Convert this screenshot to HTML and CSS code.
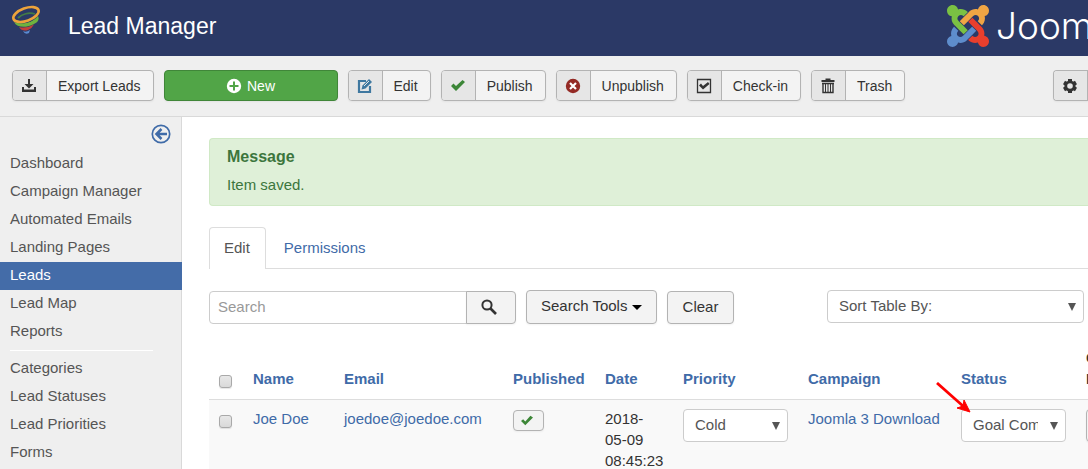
FILE: index.html
```html
<!DOCTYPE html>
<html lang="en">
<head>
<meta charset="utf-8">
<title>Lead Manager</title>
<link rel="stylesheet" href="styles.css">
</head>
<body>
<header class="header">
  <svg class="app-logo" width="32" height="34" viewBox="0 0 32 34" fill="none">
    <path d="M12 27q3 2 7-1l-1 3q-4 2-6-2z" fill="#5b8ad0"/>
    <path d="M8 23q7 2 15-2.500-2 4-6 5.500-6 2-9-3z" fill="#c2413a"/>
    <path d="M7 14c4-4 11-6 17-4M6 17q8 3 18-4" stroke="#447c45" stroke-width="1.800"/>
    <path d="M3 18c6 3 19 1 24-6 2 4-1 7-5 8.500C15 24 6 24 3 18z" fill="#6fb33e"/>
    <path d="M5 17c7 2 16-1 21-7l-4 6c-5 4-12 4-17 1z" fill="#2b3966"/>
    <ellipse cx="15" cy="10.500" rx="13.300" ry="6.300" transform="rotate(-20 15 10.500)" stroke="#eda33b" stroke-width="2.600"/>
  </svg>
  <h1 class="title">Lead Manager</h1>
  <div class="brand">
    <svg width="42" height="42" viewBox="0 0 24 24">
      <defs>
        <path id="arm-a" d="M16.719 14.759L14.220 17.260l-2.370 2.370-.462.466c-1.368 1.365-3.297 1.830-5.047 1.397-.327 1.424-1.604 2.490-3.130 2.490C1.438 23.983 0 22.547 0 20.772c0-1.518 1.055-2.790 2.469-3.120-.446-1.760.019-3.710 1.396-5.090l.179-.180 2.370 2.370-.184.181c-.769.779-.769 2.024 0 2.789.771.780 2.022.780 2.787 0l.465-.465 2.367-2.371 2.502-2.506z"/>
        <path id="arm-b" d="M17.643 21.411c-1.822.563-3.885.120-5.328-1.318l-.180-.185 2.365-2.369.180.184c.771.768 2.018.768 2.787 0 .765-.765.769-2.010-.004-2.781l-.466-.465-2.365-2.370-2.502-2.503 2.370-2.369 2.499 2.505 2.367 2.370.464.464c1.365 1.360 1.846 3.278 1.411 5.021 1.560.224 2.759 1.560 2.759 3.180 0 1.784-1.439 3.210-3.209 3.210-1.545 0-2.851-1.096-3.135-2.565z"/>
      </defs>
      <use href="#arm-a" fill="#5e8dcc"/>
      <use href="#arm-a" fill="#f0a544" transform="rotate(180 12 12)"/>
      <use href="#arm-b" fill="#e93f2d"/>
      <use href="#arm-b" fill="#7ac143" transform="rotate(180 12 12)"/>
    </svg>
    <span class="wordmark">Joom</span>
  </div>
</header>

<div class="toolbar">
  <button class="tool"><span class="cell"><svg width="16" height="16" viewBox="0 0 16 16" fill="#333"><path d="M7 1h2v5h3.500L8 10.500 3.500 6H7zM1 9h2v2.500h10V9h2v5H1z"/></svg></span><span class="label">Export Leads</span></button>
  <button class="tool new"><svg width="16" height="16" viewBox="0 0 16 16"><circle cx="8" cy="8" r="7.200" fill="#fff"/><path d="M8 3.500v9M3.500 8h9" stroke="#51a547" stroke-width="2"/></svg><span>New</span></button>
  <button class="tool"><span class="cell"><svg width="16" height="16" viewBox="0 0 16 16" fill="none" stroke="#3f78a0" stroke-width="2.200"><path d="M9 3H2v11h11V8"/><path d="M4.500 11.500l1-4L12 1l3 3-6.500 6.500z" fill="#3f78a0" stroke="none"/><path d="M7 8l5-5" stroke="#e6e6e6" stroke-width="1"/></svg></span><span class="label">Edit</span></button>
  <button class="tool"><span class="cell"><svg width="16" height="16" viewBox="0 0 16 16" fill="#3c8637"><path d="M1 8l2.500-2.500L6 8l6.500-6L15 4l-9 9z"/></svg></span><span class="label">Publish</span></button>
  <button class="tool"><span class="cell"><svg width="16" height="16" viewBox="0 0 16 16"><circle cx="8" cy="8" r="7.200" fill="#942a25"/><path d="M5 5l6 6M11 5l-6 6" stroke="#fff" stroke-width="2.200"/></svg></span><span class="label">Unpublish</span></button>
  <button class="tool"><span class="cell"><svg width="16" height="16" viewBox="0 0 16 16"><path d="M1.500 1.500h13v13h-13z" fill="none" stroke="#333" stroke-width="1.300"/><path d="M3 7.500L5 5.500 7 8l5-4 1.500 2L7 11.500z" fill="#333"/></svg></span><span class="label">Check-in</span></button>
  <button class="tool"><span class="cell"><svg width="16" height="16" viewBox="0 0 16 16" fill="none" stroke="#333"><path d="M1.500 3h13M5.500 1.500h5" stroke-width="2"/><path d="M3 5v9.500h10V5M2 5.500h12" stroke-width="1.400"/><path d="M5.500 6v8M8 6v8M10.500 6v8"/></svg></span><span class="label">Trash</span></button>
  <button class="tool options" aria-label="Options"><span class="cell"><svg width="16" height="16" viewBox="0 0 16 16"><path d="M8 1v14M2 4.500l12 7M14 4.500l-12 7" stroke="#333" stroke-width="4"/><circle cx="8" cy="8" r="5.600" fill="#333"/><circle cx="8" cy="8" r="2.800" fill="#e6e6e6"/></svg></span></button>
</div>

<div class="page">
  <aside class="sidebar">
    <button class="collapse" aria-label="Collapse sidebar"><svg width="20" height="20" viewBox="0 0 20 20" fill="none" stroke="#3f6ba8"><circle cx="10" cy="10" r="8.700" stroke-width="1.700"/><path d="M16 10H5M10.500 5l-5 5 5 5" stroke-width="2.500"/></svg></button>
    <nav class="nav">
      <a href="#">Dashboard</a>
      <a href="#">Campaign Manager</a>
      <a href="#">Automated Emails</a>
      <a href="#">Landing Pages</a>
      <a href="#" class="active">Leads</a>
      <a href="#">Lead Map</a>
      <a href="#">Reports</a>
      <hr>
      <a href="#">Categories</a>
      <a href="#">Lead Statuses</a>
      <a href="#">Lead Priorities</a>
      <a href="#">Forms</a>
    </nav>
  </aside>
  <main class="main">
    <section class="message">
      <h2>Message</h2>
      <p>Item saved.</p>
    </section>
    <div class="tabs">
      <a href="#" class="tab current">Edit</a>
      <a href="#" class="tab">Permissions</a>
    </div>
    <form class="filters">
      <div class="search">
        <input type="text" placeholder="Search" aria-label="Search">
        <button type="button" class="btn find" aria-label="Search"><svg width="16" height="16" viewBox="0 0 16 16" fill="none" stroke="#333"><circle cx="6" cy="6" r="4.600" stroke-width="2"/><path d="M9 9l6 6" stroke-width="2.600"/></svg></button>
      </div>
      <button type="button" class="btn tools">Search Tools <svg width="10" height="5" viewBox="0 0 10 5"><path d="M0 0h10L5 5z"/></svg></button>
      <button type="button" class="btn">Clear</button>
      <select class="select sort" aria-label="Sort Table By:"><option>Sort Table By:</option></select>
    </form>
    <table class="leads">
      <colgroup><col class="c-check"><col class="c-name"><col class="c-email"><col class="c-pub"><col class="c-date"><col class="c-prio"><col class="c-camp"><col class="c-prio"><col></colgroup>
      <thead>
        <tr><th><input type="checkbox" class="check" aria-label="Select all"></th><th><a href="#">Name</a></th><th><a href="#">Email</a></th><th><a href="#">Published</a></th><th><a href="#">Date</a></th><th><a href="#">Priority</a></th><th><a href="#">Campaign</a></th><th><a href="#">Status</a></th><th>C<br>L</th></tr>
      </thead>
      <tbody>
        <tr>
          <td><input type="checkbox" class="check" aria-label="Select Joe Doe"></td>
          <td><a href="#">Joe Doe</a></td>
          <td><a href="#">joedoe@joedoe.com</a></td>
          <td><button class="btn state" aria-label="Published"><svg width="14" height="12" viewBox="0 0 16 14" fill="#3c8637"><path d="M1 7l2.500-2L6 7.500 12 1l3 2-9 9z"/></svg></button></td>
          <td>2018-05-09 08:45:23</td>
          <td><select class="select" aria-label="Priority"><option>Cold</option></select></td>
          <td><a href="#">Joomla 3 Download</a></td>
          <td class="status"><select class="select" aria-label="Status"><option>Goal Completed</option></select>
            <svg class="pointer" width="36" height="32" viewBox="0 0 36 32"><path d="M1 1l26 23" stroke="red" stroke-width="2.800"/><path d="M34 30l-13-4 6-2 1-6z" fill="red" stroke="red"/></svg>
          </td>
          <td><button class="btn edge" aria-label="Details"></button></td>
        </tr>
      </tbody>
    </table>
  </main>
</div>
</body>
</html>
```
FILE: styles.css
```css
* { box-sizing: border-box; }
body {
  margin: 0;
  min-height: 100vh;
  display: flex;
  flex-direction: column;
  overflow: hidden;
  background: #fff;
  color: #333;
  font: 15px/21px "Liberation Sans", Arial, sans-serif;
}
button, input, select { font: inherit; color: inherit; margin: 0; }
svg { flex: none; }
a { color: #3f6ba8; text-decoration: none; }

.header {
  display: flex;
  height: 56px;
  padding-left: 11px;
  background: #2b3966;
  color: #fff;
  overflow: hidden;
}
.app-logo { margin-top: 4px; }
.title {
  margin: 0 0 0 25px;
  padding-top: 12px;
  font-size: 23px;
  font-weight: normal;
  line-height: 28px;
}
.brand {
  display: flex;
  gap: 7px;
  width: 141px;
  margin-left: auto;
  padding-top: 5px;
}
.wordmark {
  font: 300 37px/42px Inter, sans-serif;
}

.toolbar {
  display: flex;
  gap: 10px;
  padding: 14px 0 15px 12px;
  background: #efefef;
  border-bottom: 1px solid #d9d9d9;
}
.tool {
  display: flex;
  height: 31px;
  padding: 0;
  overflow: hidden;
  background: #f3f3f3;
  border: 1px solid #b3b3b3;
  border-radius: 4px;
  box-shadow: 0 1px 2px rgba(0, 0, 0, .05);
  font-size: 14px;
  white-space: nowrap;
}
.cell {
  display: flex;
  align-items: center;
  justify-content: center;
  width: 34px;
  height: 29px;
  padding-right: 1px;
  background: #e6e6e6;
  border-right: 1px solid #b3b3b3;
}
.label { padding: 0 12px 0 11px; line-height: 31px; }
.new {
  align-items: center;
  justify-content: center;
  gap: 5px;
  width: 174px;
  line-height: 31px;
  background: #51a547;
  border-color: #408639;
  color: #fff;
}
.new span { padding-top: 1px; }
.options {
  margin-left: auto;
  border-right: 0;
  border-radius: 4px 0 0 4px;
}

.page { display: flex; flex: 1; }
.sidebar {
  width: 182px;
  flex: none;
  padding-top: 7px;
  background: #efefef;
  border-right: 1px solid #d9d9d9;
}
.collapse {
  display: block;
  margin: 0 10px 6px auto;
  padding: 0;
  border: 0;
  background: none;
  height: 20px;
}
.nav { display: flex; flex-direction: column; }
.nav a {
  height: 28px;
  padding: 2px 10px;
  color: #555;
}
.nav .active {
  margin-right: -1px;
  background: #446ca8;
  color: #fff;
}
.nav hr {
  width: 143px;
  height: 1px;
  margin: 4px 10px;
  border: 0;
  background: #fff;
}

.main { flex: 1; min-width: 0; padding: 21px 0 0 27px; }
.message {
  padding: 7px 17px 10px;
  border: 1px solid #d0e9c6;
  border-right: 0;
  border-radius: 4px 0 0 4px;
  background: #dff0d8;
  color: #3c763d;
}
.message h2 { margin: 0 0 7px; font-size: 16px; line-height: 22px; }
.message p { margin: 0; line-height: 20px; }

.tabs {
  display: flex;
  margin: 21px 0;
  border-bottom: 1px solid #ddd;
}
.tab { padding: 9px 17px 10px; border: 1px solid transparent; border-bottom: 0; }
.current {
  padding: 9px 15px 10px 14px;
  margin-bottom: -1px;
  background: #fff;
  border-color: #ddd;
  border-radius: 4px 4px 0 0;
  color: #555;
}

.filters { display: flex; align-items: flex-end; gap: 10px; padding-right: 4px; }
.btn {
  height: 33px;
  padding: 0 15px 2px;
  background: #f3f3f3;
  border: 1px solid #b3b3b3;
  border-radius: 4px;
  box-shadow: 0 1px 2px rgba(0, 0, 0, .05);
  color: #333;
  white-space: nowrap;
}
.btn svg { vertical-align: middle; }
.tools { height: 34px; padding: 0 14px 3px; }
.search { display: flex; }
.search input {
  width: 258px;
  height: 33px;
  padding: 0 8px 2px;
  border: 1px solid #ccc;
  border-radius: 4px 0 0 4px;
}
.search input::placeholder { color: #999; }
.find { width: 50px; margin-left: -1px; padding: 0 4px 5px 0; border-radius: 0 4px 4px 0; }
.select {
  display: block;
  width: 105px;
  height: 33px;
  padding: 0 27px 2px 11px;
  appearance: none;
  border: 1px solid #ccc;
  border-radius: 4px;
  color: #555;
  background: #fff url("data:image/svg+xml,%3Csvg xmlns='http://www.w3.org/2000/svg' width='8' height='8'%3E%3Cpath d='M0 0h8L4 8z' fill='%23555'/%3E%3C/svg%3E") no-repeat right 7px center;
}
.sort { width: 257px; margin-left: auto; align-self: flex-start; }

.leads {
  width: 100%;
  margin-top: 15px;
  table-layout: fixed;
  border-collapse: collapse;
}
.c-check { width: 34px; }
.c-name { width: 91px; }
.c-email { width: 169px; }
.c-pub { width: 92px; }
.c-date { width: 78px; }
.c-prio { width: 125px; }
.c-camp { width: 153px; }
.leads th { padding: 8px 0 10px 10px; text-align: left; vertical-align: bottom; }
.leads td {
  padding: 8px 0 0 10px;
  vertical-align: top;
  background: #f9f9f9;
  border-top: 1px solid #ddd;
}
.leads td:nth-child(5) { padding-right: 9px; }
.leads .select, .edge { margin-top: 1px; }
.check {
  display: block;
  width: 13px;
  height: 13px;
  appearance: none;
  border: 1px solid #a9a9a9;
  border-radius: 3px;
  background: linear-gradient(#e8e8e8, #d9d9d9);
  box-shadow: 0 1px 1px rgba(0, 0, 0, .1);
}
th .check { margin-bottom: 1px; }
td .check { margin-top: 7px; }
.state { display: flex; align-items: center; height: 21px; width: 31px; padding: 0 6px; margin-top: 2px; }
.edge { width: 40px; }
.status { position: relative; }
.pointer { position: absolute; left: -15px; top: -18px; }
```
